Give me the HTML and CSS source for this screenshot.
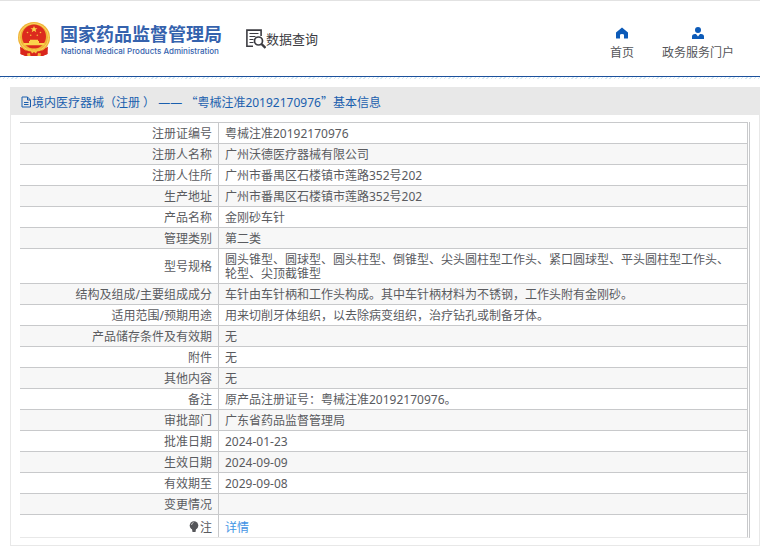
FILE: index.html
```html
<!DOCTYPE html>
<html lang="zh-CN">
<head>
<meta charset="utf-8">
<meta name="viewport" content="width=device-width, initial-scale=1">
<title>数据查询</title>
<link rel="stylesheet" href="styles.css">
</head>
<body>
<header class="site-header">
  <div class="brand">
    <svg class="emblem" viewBox="0 0 32 34" aria-hidden="true">
      <path d="M4 23 2.500 32l5 2h17l5-2L28 23z" fill="#d9261c"/>
      <ellipse cx="16" cy="15.500" rx="16" ry="15.500" fill="#f0b336"/>
      <ellipse cx="16" cy="15.500" rx="14.500" ry="14" fill="none" stroke="#f8d366" stroke-width="1"/>
      <path d="M2 24.500 2.500 32l5 2h17l5-2 .5-7.500-5 4H7z" fill="#d9261c"/>
      <circle cx="16" cy="14.500" r="12" fill="#dc2a1e"/>
      <path d="m16 4 1 2.300h2.500l-2 1.500.8 2.400-2.300-1.400-2.300 1.400.8-2.400-2-1.500H15z" fill="#fbd44c"/>
      <g fill="#f7bd3c"><circle cx="9.500" cy="10.500" r=".8"/><circle cx="22.500" cy="10.500" r=".8"/><circle cx="12.700" cy="13.300" r=".8"/><circle cx="19.300" cy="13.300" r=".8"/></g>
      <path d="M12 19v-1.200h8V19h1v2h5.500v2.200h-21V21H11v-2z" fill="#fbd44c"/>
      <path d="M8 26q4 0 6 2l2-1.500 2 1.500q2-2 6-2l-2 3-3 .5-1 2-2-1.500-2 1.500-1-2-3-.5z" fill="#f6c544"/>
      <path d="m9 31.500 3-.5.500 3H9.500zm14 0-3-.5-.5 3h3z" fill="#f3b23a"/>
    </svg>
    <div class="brand-text">
      <span class="brand-cn">国家药品监督管理局</span>
      <span class="brand-en">National Medical Products Administration</span>
    </div>
  </div>
  <div class="section-name">
    <svg class="search-icon" viewBox="0 0 20 20" fill="none" stroke="#3c3c42" aria-hidden="true">
      <path d="M7 17.300H.9V1.100h14.200v6" stroke-width="1.600"/>
      <path d="M3.500 4.500h9M3.500 7.500h6M3.500 10.500h4M3.500 13.500h4" stroke-width="1.200"/>
      <circle cx="12.500" cy="12" r="4" stroke-width="1.700"/>
      <path d="m15.500 15 4 4" stroke-width="2.400"/>
    </svg>
    <span>数据查询</span>
  </div>
  <nav class="top-nav">
    <a href="#home">
      <svg class="nav-icon" viewBox="0 0 12 12" aria-hidden="true"><path d="M6 .5 0 5.500V11q0 .5.500.5H4V8q0-1 2-1t2 1v3.500h3.500q.5 0 .5-.5V5.500z" fill="#0d5bb8"/></svg>
      <span>首页</span>
    </a>
    <a href="#portal">
      <svg class="nav-icon" viewBox="0 0 12 12" aria-hidden="true"><circle cx="6" cy="3" r="3" fill="#0d5bb8"/><path d="M0 12V9.500Q0 7 3 7h1l2 2.500L8 7h1q3 0 3 2.500V12z" fill="#0d5bb8"/></svg>
      <span>政务服务门户</span>
    </a>
  </nav>
</header>
<main class="panel">
  <h1 class="panel-title">
    <svg class="doc-icon" viewBox="0 0 11 12" fill="none" stroke="#1a5fae" aria-hidden="true"><path d="M1 1h5.500L9.500 4v7H1zM6.500 1v3h3M3 6.500h4.500M3 8.500h4.500"/></svg>
    <span>境内医疗器械（注册 ） —— <span class="quote">“</span>粤械注准20192170976<span class="quote">”</span>基本信息</span>
  </h1>
  <table class="details">
    <tbody>
      <tr><th scope="row">注册证编号</th><td>粤械注准20192170976</td></tr>
      <tr><th scope="row">注册人名称</th><td>广州沃德医疗器械有限公司</td></tr>
      <tr><th scope="row">注册人住所</th><td>广州市番禺区石楼镇市莲路352号202</td></tr>
      <tr><th scope="row">生产地址</th><td>广州市番禺区石楼镇市莲路352号202</td></tr>
      <tr><th scope="row">产品名称</th><td>金刚砂车针</td></tr>
      <tr><th scope="row">管理类别</th><td>第二类</td></tr>
      <tr><th scope="row">型号规格</th><td>圆头锥型、圆球型、圆头柱型、倒锥型、尖头圆柱型工作头、紧口圆球型、平头圆柱型工作头、轮型、尖顶截锥型</td></tr>
      <tr><th scope="row">结构及组成/主要组成成分</th><td>车针由车针柄和工作头构成。其中车针柄材料为不锈钢，工作头附有金刚砂。</td></tr>
      <tr><th scope="row">适用范围/预期用途</th><td>用来切削牙体组织，以去除病变组织，治疗钻孔或制备牙体。</td></tr>
      <tr><th scope="row">产品储存条件及有效期</th><td>无</td></tr>
      <tr><th scope="row">附件</th><td>无</td></tr>
      <tr><th scope="row">其他内容</th><td>无</td></tr>
      <tr><th scope="row">备注</th><td>原产品注册证号：粤械注准20192170976。</td></tr>
      <tr><th scope="row">审批部门</th><td>广东省药品监督管理局</td></tr>
      <tr><th scope="row">批准日期</th><td>2024-01-23</td></tr>
      <tr><th scope="row">生效日期</th><td>2024-09-09</td></tr>
      <tr><th scope="row">有效期至</th><td>2029-09-08</td></tr>
      <tr><th scope="row">变更情况</th><td></td></tr>
      <tr class="note"><th scope="row"><svg class="bulb-icon" viewBox="0 0 10 12" aria-hidden="true"><circle cx="5" cy="4.500" r="4.300" fill="#55565a"/><path d="M3 8h4l-.5 3h-3z" fill="#55565a"/><path d="M2.500 4q.3-2 2-2.500" stroke="#ccc" fill="none"/></svg>注</th><td><a href="#detail">详情</a></td></tr>
    </tbody>
  </table>
</main>
</body>
</html>
```
FILE: styles.css
```css
* {
  box-sizing: border-box;
}

body {
  margin: 0;
  background: #fff;
  color: #5a5b5f;
  font: 12px/14px "Noto Sans", "Noto Sans CJK SC", sans-serif;
}

a {
  color: #4394e4;
  text-decoration: none;
}

svg {
  flex: none;
}

.site-header {
  display: flex;
  align-items: center;
  height: 77px;
  padding: 0 26px 0 18px;
  border-top: 1px solid #e2e2e2;
  border-bottom: 1px solid #1c519c;
}

.site-header::after {
  content: "";
  position: absolute;
  top: 77px;
  left: 0;
  right: 0;
  height: 2px;
  background: repeating-linear-gradient(135deg, #d5e8f3 0 1px, #fff 1px 3px);
}

.brand {
  display: flex;
  align-items: center;
  gap: 10px;
}

.emblem {
  width: 32px;
  height: 34px;
}

.brand-text {
  display: flex;
  flex-direction: column;
  padding-top: 3px;
  white-space: nowrap;
}

.brand-cn {
  color: #3562ad;
  font-size: 18px;
  font-weight: 700;
  line-height: 22px;
}

.brand-en {
  padding-left: 1px;
  color: #3562ad;
  font: 500 8px/12px Inter, sans-serif;
}

.section-name {
  display: flex;
  align-items: center;
  margin-left: 24px;
  color: #3c3c42;
  font-size: 13px;
}

.search-icon {
  width: 20px;
  height: 20px;
}

.top-nav {
  display: flex;
  gap: 28px;
  margin-left: auto;
}

.top-nav a {
  display: flex;
  flex-direction: column;
  align-items: center;
  gap: 6px;
  color: #55565a;
  line-height: 16px;
  padding-top: 11px;
}

.nav-icon {
  width: 12px;
  height: 12px;
}

.panel {
  margin: 10px 0 0 10px;
  padding-bottom: 7px;
  border: 1px solid #e8e8e8;
  border-top: 0;
}

.panel-title {
  display: flex;
  align-items: center;
  height: 28px;
  margin: 0 0 7px;
  padding: 2px 0 0 10px;
  background: #e8e8e8;
  color: #1a5fae;
  font-size: 12px;
  font-weight: 400;
}

.quote {
  font-family: "Noto Sans CJK SC", sans-serif;
}

.doc-icon {
  width: 11px;
  height: 12px;
}

.details {
  width: calc(100% - 18px);
  margin: 0 9px;
  border-spacing: 0;
  border-right: 3px double #c8c9cb;
  border-bottom: 1px solid #e8e8e8;
}

.details th,
.details td {
  height: 21px;
  padding: 4px 6px 2px;
  border-top: 1px solid #c8c9cb;
  font-weight: 400;
}

.details th {
  width: 198px;
  text-align: right;
}

.details td {
  padding-right: 18px;
  border-left: 1px solid #c8c9cb;
}

.details tr:nth-child(even) {
  background: #f7f7f7;
}

.details .note th,
.details .note td {
  padding-top: 5px;
  padding-bottom: 1px;
  line-height: 16px;
}

.bulb-icon {
  width: 10px;
  height: 12px;
  margin-right: 1px;
  vertical-align: -1px;
}
```
